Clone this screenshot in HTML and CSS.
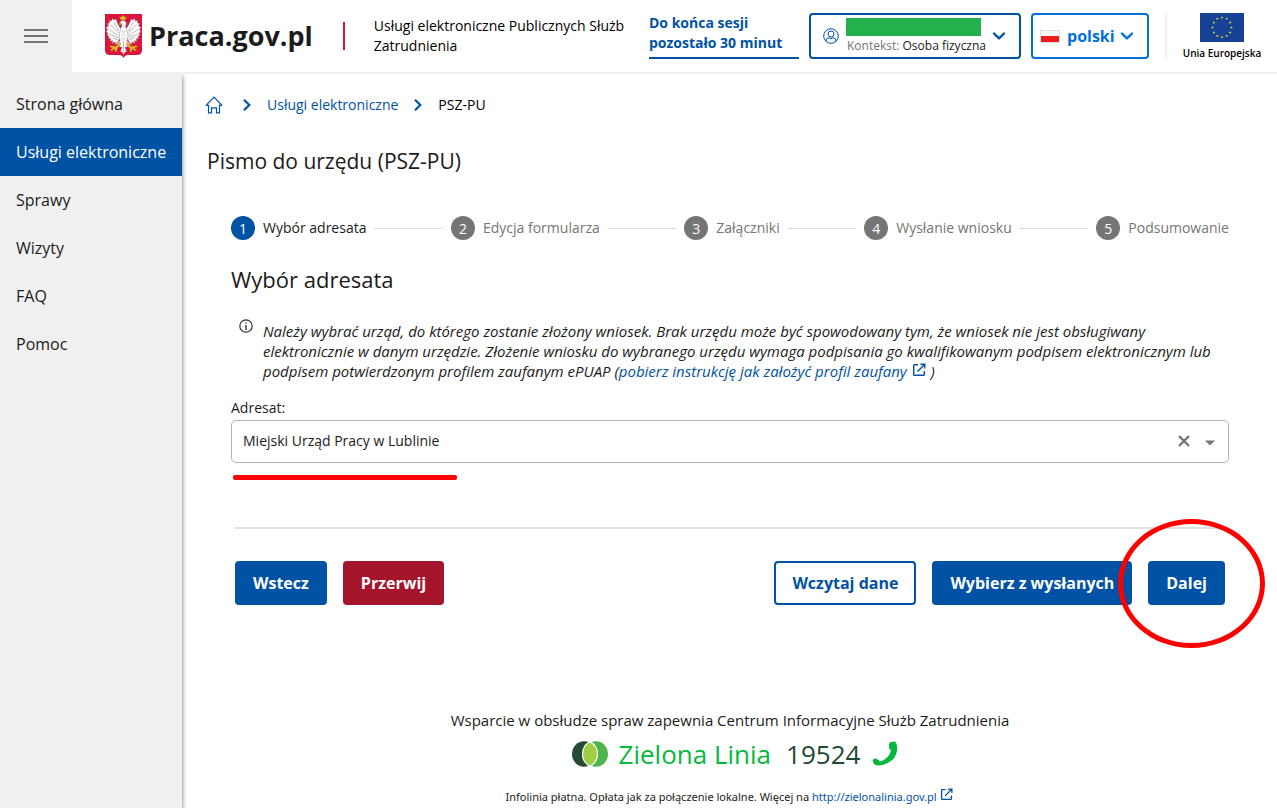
FILE: index.html
```html
<!DOCTYPE html>
<html lang="pl">
<head>
<meta charset="utf-8">
<meta name="viewport" content="width=device-width, initial-scale=1">
<title>Pismo do urzędu (PSZ-PU) - Praca.gov.pl</title>
<link rel="stylesheet" href="styles.css">
</head>
<body>
<svg class="defs" aria-hidden="true">
  <symbol id="external" viewBox="0 0 14 14"><path d="M6 1.700H2.500a.8.8 0 0 0-.8.8v9a.8.8 0 0 0 .8.8h9a.8.8 0 0 0 .8-.8V8M8.500 1.200h4.300v4.300M12.600 1.400 5.500 8.500" fill="none" stroke="currentColor" stroke-width="1.400"/></symbol>
  <symbol id="chevron-down" viewBox="0 0 14 10"><path d="M2 2.500 7 7.300 12 2.500" fill="none" stroke="currentColor" stroke-width="2.400" stroke-linecap="round" stroke-linejoin="round"/></symbol>
  <symbol id="chevron-right" viewBox="0 0 8 14"><path d="M1 1.800 6.300 7 1 12.200" fill="none" stroke="currentColor" stroke-width="2.200"/></symbol>
  <symbol id="star" viewBox="-5 -5 10 10"><path d="M0-5 1.200-1.600H4.800L1.900.6 2.900 4 0 1.900-2.900 4-1.900.6-4.800-1.600H-1.200Z"/></symbol>
</svg>

<header class="header">
  <button class="menu-toggle" type="button" aria-label="Menu">
    <svg width="24" height="16" viewBox="0 0 24 16"><path d="M0 2h24M0 8h24M0 14h24" stroke="#757575" stroke-width="2"/></svg>
  </button>
  <div class="header-body">
    <a class="brand" href="#">
      <svg class="crest" width="37" height="44" viewBox="0 0 74 88" aria-hidden="true">
        <path d="M0 0h74v72q0 10-10 10H46q-6 0-9 6-3-6-9-6H10Q0 82 0 72Z" fill="#dc143c"/>
        <g fill="#fff" stroke="#8b7f80" stroke-width="1">
          <path d="M33 29C27 27 26 18 21 10L18 12 15 9 13 14 9 13 9 18 5 19 7 24 2 27 5 31 2 36 6 38 4 43 8 44 7 49 11 49 11 55 15 53 15 59 20 55 21 62 26 55 30 49Z"/>
          <path d="M41 29C47 27 48 18 53 10L56 12 59 9 61 14 65 13 65 18 69 19 67 24 72 27 69 31 72 36 68 38 70 43 66 44 67 49 63 49 63 55 59 53 59 59 54 55 53 62 48 55 44 49Z"/>
          <path d="M32 28 34 22 31 20 28 21 31 15Q37 10 42 16 44 20 41 25L43 31Q49 42 44 53L51 60 44 61 46 66 40 66 43 75 39 77 37 82 35 77 31 75 34 66 28 66 30 61 23 60 30 53Q26 40 32 28Z"/>
        </g>
        <path d="M11 21 27 38M7 30 27 44M8 40 27 48M15 48 27 52M17 16 28 34M63 21 47 38M67 30 47 44M66 40 47 48M59 48 47 52M57 16 46 34M34 34l3 3 4-3M33 41l4 3 4-3M33 48l4 3 4-3M37 54v22" fill="none" stroke="#aaa0a0" stroke-width="1.500"/>
        <path d="M31 12 29 5 33 6 36 2 39 6 43 5 41 12ZM27 20l5-2 2 3-5 1Z" fill="#eab72b" stroke="#8a5a16" stroke-width=".8"/>
        <path d="M29 56 22 65 11 63 9 66 16 68 10 72 13 74 20 70 20 76 23 76 25 68 32 60ZM45 56 52 65 63 63 65 66 58 68 64 72 61 74 54 70 54 76 51 76 49 68 42 60Z" fill="#f2bb23" stroke="#8a5a16" stroke-width=".7"/>
      </svg>
      <span class="brand-name">Praca.gov.pl</span>
    </a>
    <span class="brand-divider"></span>
    <p class="tagline">Usługi elektroniczne Publicznych Służb Zatrudnienia</p>
    <p class="session">Do końca sesji pozostało 30 minut</p>
    <button class="context" type="button">
      <svg width="16" height="16" viewBox="0 0 16 16" fill="none" stroke="currentColor" aria-hidden="true"><circle cx="8" cy="8" r="7.300"/><circle cx="8" cy="6" r="3"/><path d="M3.200 13.200V12q0-2 3-2.200L8 10.700l1.800-.9q3 .2 3 2.200v1.200"/></svg>
      <span class="context-text">
        <span class="redacted"></span>
        <span class="context-label"><span class="muted">Kontekst:</span> Osoba fizyczna</span>
      </span>
      <svg width="14" height="10" aria-hidden="true"><use href="#chevron-down"/></svg>
    </button>
    <button class="language" type="button">
      <svg width="20" height="13" viewBox="0 0 20 13" aria-hidden="true"><path d="M.5.5h19v12H.5Z" fill="#f7f7f7" stroke="#ddd"/><path d="M1 6h18v6H1Z" fill="#ee1c1c"/></svg>
      <span>polski</span>
      <svg width="14" height="10" aria-hidden="true"><use href="#chevron-down"/></svg>
    </button>
    <div class="eu">
      <svg width="44" height="29" viewBox="0 0 44 29" fill="#f5e625" aria-hidden="true">
        <path d="M0 0h44v29H0Z" fill="#164194"/>
        <use href="#star" x="20.500" y="3" width="3" height="3"/><use href="#star" x="25.200" y="4.300" width="3" height="3"/><use href="#star" x="28.700" y="8" width="3" height="3"/><use href="#star" x="30" y="13" width="3" height="3"/><use href="#star" x="28.700" y="18" width="3" height="3"/><use href="#star" x="25.200" y="21.500" width="3" height="3"/><use href="#star" x="20.500" y="22.800" width="3" height="3"/><use href="#star" x="15.800" y="21.500" width="3" height="3"/><use href="#star" x="12.300" y="18" width="3" height="3"/><use href="#star" x="11" y="13" width="3" height="3"/><use href="#star" x="12.300" y="8" width="3" height="3"/><use href="#star" x="15.800" y="4.300" width="3" height="3"/>
      </svg>
      <span>Unia Europejska</span>
    </div>
  </div>
</header>

<div class="layout">
  <nav class="sidebar" aria-label="Menu główne">
    <a href="#">Strona główna</a>
    <a class="active" href="#" aria-current="page">Usługi elektroniczne</a>
    <a href="#">Sprawy</a>
    <a href="#">Wizyty</a>
    <a href="#">FAQ</a>
    <a href="#">Pomoc</a>
  </nav>

  <div class="content">
    <nav class="breadcrumbs" aria-label="Okruszki">
      <a href="#" aria-label="Strona główna"><svg width="18" height="18" viewBox="0 0 18 18" fill="none" stroke="currentColor" stroke-width="1.200"><path d="M1 9.300 9 1.200l8 8.100M1 9.300h2.500v7.500h3v-5h5v5h3V9.300H17"/></svg></a>
      <svg width="8" height="14" aria-hidden="true"><use href="#chevron-right"/></svg>
      <a href="#">Usługi elektroniczne</a>
      <svg width="8" height="14" aria-hidden="true"><use href="#chevron-right"/></svg>
      <span>PSZ-PU</span>
    </nav>
    <h1>Pismo do urzędu (PSZ-PU)</h1>

    <main class="panel">
      <ol class="stepper">
        <li class="step current"><span class="num">1</span><span>Wybór adresata</span></li>
        <li class="line" role="presentation"></li>
        <li class="step"><span class="num">2</span><span>Edycja formularza</span></li>
        <li class="line" role="presentation"></li>
        <li class="step"><span class="num">3</span><span>Załączniki</span></li>
        <li class="line" role="presentation"></li>
        <li class="step"><span class="num">4</span><span>Wysłanie wniosku</span></li>
        <li class="line" role="presentation"></li>
        <li class="step"><span class="num">5</span><span>Podsumowanie</span></li>
      </ol>

      <h2>Wybór adresata</h2>

      <div class="info">
        <svg width="14" height="14" viewBox="0 0 14 14" fill="none" stroke="#333" aria-hidden="true"><circle cx="7" cy="7" r="6.200" stroke-width="1.200"/><path d="M7 6v5M7 3.400v1.400" stroke-width="1.400"/></svg>
        <p>Należy wybrać urząd, do którego zostanie złożony wniosek. Brak urzędu może być spowodowany tym, że wniosek nie jest obsługiwany elektronicznie w danym urzędzie. Złożenie wniosku do wybranego urzędu wymaga podpisania go kwalifikowanym podpisem elektronicznym lub podpisem potwierdzonym profilem zaufanym ePUAP (<a href="#">pobierz instrukcję jak założyć profil zaufany <svg class="ext" width="14" height="14" aria-hidden="true"><use href="#external"/></svg></a> )</p>
      </div>

      <div class="field">
        <label for="adresat">Adresat:</label>
        <div class="combo">
          <input id="adresat" type="text" value="Miejski Urząd Pracy w Lublinie">
          <button type="button" aria-label="Wyczyść"><svg width="14" height="14" viewBox="0 0 14 14"><path d="m2 2 10 10M12 2 2 12" stroke="#757575" stroke-width="2.400"/></svg></button>
          <button type="button" aria-label="Otwórz"><svg width="10" height="6" viewBox="0 0 10 6"><path d="M0 .5h10L5 5.500Z" fill="#757575"/></svg></button>
        </div>
        <span class="mark-line"></span>
      </div>

      <div class="actions">
        <button class="btn" type="button">Wstecz</button>
        <button class="btn danger" type="button">Przerwij</button>
        <button class="btn outline" type="button">Wczytaj dane</button>
        <button class="btn" type="button">Wybierz z wysłanych</button>
        <div class="next">
          <button class="btn" type="button">Dalej</button>
          <span class="mark-ring"></span>
        </div>
      </div>
    </main>

    <footer class="footer">
      <p>Wsparcie w obsłudze spraw zapewnia Centrum Informacyjne Służb Zatrudnienia</p>
      <div class="hotline">
        <svg width="36" height="26" viewBox="0 0 36 26" aria-hidden="true"><ellipse cx="12" cy="13" rx="12" ry="12.700" fill="#264b34"/><ellipse cx="24" cy="13" rx="12" ry="12.700" fill="#4db54b"/><path d="M18 .8C28 6 28 20 18 25.200 8 20 8 6 18 .8Z" fill="#9fce42" stroke="#fff" stroke-width="1.200"/></svg>
        <span class="name">Zielona Linia</span>
        <span class="number">19524</span>
        <svg width="26" height="26" viewBox="0 0 26 26" aria-hidden="true"><path d="M18.500 1 22.200.6Q25 .8 25.300 8.500 24 18 16.500 21.500 9 25.700 3.500 24 .6 22.500.7 18.800L3.200 17.300 7.200 19.300 7.700 20.700Q17.500 17.500 19 9L17.300 8 16.900 3.300Z" fill="#04b93c"/></svg>
      </div>
      <p class="small">Infolinia płatna. Opłata jak za połączenie lokalne. Więcej na <a href="#">http://zielonalinia.gov.pl <svg class="ext" width="13" height="13" aria-hidden="true"><use href="#external"/></svg></a></p>
    </footer>
  </div>
</div>
</body>
</html>
```

FILE: styles.css
```css
* { box-sizing: border-box; }
body {
  margin: 0;
  min-height: 100vh;
  display: flex;
  flex-direction: column;
  font: 14px/20px "Open Sans", "Noto Sans", sans-serif;
  color: #1b1b1b;
  background: #fff;
}
p, h1, h2, ol { margin: 0; padding: 0; }
a { color: #0052a5; text-decoration: none; }
button { font: inherit; cursor: pointer; }
svg { flex: none; }
.defs { position: absolute; width: 0; height: 0; }

.header { display: flex; background: #f0f0f0; padding-bottom: 2px; }
.menu-toggle {
  flex: none;
  width: 72px;
  height: 72px;
  padding: 0;
  border: 0;
  background: #f0f0f0;
  display: flex;
  align-items: center;
  justify-content: center;
}
.header-body {
  flex: 1;
  display: flex;
  align-items: center;
  padding: 0 16px 0 33px;
  background: #fff;
  color: #000;
}
.brand { display: flex; align-items: center; gap: 7px; color: #1b1b1b; }
.brand-name { font-size: 27px; line-height: 40px; font-weight: 700; }
.brand-divider { width: 2px; height: 28px; margin: 0 29px 0 30px; background: #dc143c; }
.tagline { flex: 1; padding-right: 16px; }
.session {
  flex: none;
  width: 150px;
  padding-bottom: 4px;
  border-bottom: 2px solid #0052a5;
  color: #0052a5;
  font-weight: 700;
}
.context, .language {
  flex: none;
  height: 46px;
  display: flex;
  align-items: center;
  border: 2px solid #0052a5;
  border-radius: 4px;
  background: #fff;
  color: #0052a5;
}
.context { width: 212px; margin: 0 10px; padding: 0 12px; gap: 6px; }
.context-text { display: flex; flex-direction: column; gap: 2px; text-align: left; margin-left: 2px; }
.redacted { width: 135px; height: 18px; background: #24b14d; margin-left: -1px; }
.context-label { font-size: 12px; line-height: 16px; color: #1b1b1b; white-space: nowrap; }
.muted { color: #757575; }
.language {
  width: 118px;
  padding: 0 7px;
  gap: 7px;
  border-color: #006fdc;
  color: #006fdc;
  font-size: 16px;
  font-weight: 700;
}
.language svg:last-child { margin-left: -2px; }
.eu {
  flex: none;
  width: 96px;
  height: 46px;
  display: flex;
  flex-direction: column;
  align-items: center;
  gap: 4px;
  margin-left: 16px;
  padding-left: 16px;
  border-left: 2px solid #f0f0f0;
  font-size: 10px;
  line-height: 14px;
  font-weight: 600;
  white-space: nowrap;
}

.layout { flex: 1; display: flex; }
.sidebar {
  flex: none;
  width: 182px;
  padding-top: 6px;
  background: #f0f0f0;
  box-shadow: 1px 2px 4px rgba(0, 0, 0, .4);
  clip-path: inset(0 -8px 0 0);
}
.sidebar a { display: block; padding: 12px 16px; font-size: 16px; line-height: 24px; color: #1b1b1b; white-space: nowrap; }
.sidebar .active { background: #0052a5; color: #fff; }

.content { flex: 1; min-width: 0; }
.breadcrumbs { display: flex; align-items: center; gap: 16px; padding: 21px 23px 0; color: #000; }
.breadcrumbs > svg { color: #0052a5; }
.breadcrumbs a { display: flex; }
.breadcrumbs a:first-child { margin-right: 4px; }
h1, h2 { font-weight: 500; }
h1 { padding: 31px 25px 0; font-size: 21px; line-height: 30px; }

.panel { padding: 40px 48px 0 49px; }
.stepper { display: flex; align-items: center; gap: 8px; list-style: none; }
.step { display: flex; align-items: center; gap: 8px; color: #757575; line-height: 22px; white-space: nowrap; }
.num {
  width: 24px;
  height: 24px;
  border-radius: 50%;
  background: #757575;
  color: #fff;
  text-align: center;
  line-height: 26px;
}
.current { color: #1b1b1b; }
.current .num { background: #0052a5; }
.line { flex: 1; height: 1px; background: #dcdcdc; }
h2 { margin-top: 24px; font-size: 22px; line-height: 30px; }
.info { display: flex; gap: 10px; padding: 25px 0 0 8px; }
.info p { padding-top: 2px; font-size: 15px; font-style: italic; }
.ext { margin: 0 1px; }

.field { position: relative; margin-top: 17px; }
.field label { display: block; }
.combo {
  display: flex;
  align-items: center;
  height: 43px;
  margin-top: 2px;
  padding: 0 8px 1px 0;
  border: 1px solid #b3b3b3;
  border-radius: 5px;
}
.combo input {
  flex: 1;
  min-width: 0;
  padding: 0 11px;
  border: 0;
  outline: 0;
  background: none;
  font: inherit;
  color: #1b1b1b;
}
.combo button {
  display: flex;
  align-items: center;
  justify-content: center;
  width: 26px;
  height: 26px;
  padding: 0;
  border: 0;
  background: none;
}
.combo button:last-child { width: 20px; margin-left: 3px; padding-top: 4px; }
.mark-line {
  position: absolute;
  left: 2px;
  bottom: -17px;
  width: 224px;
  height: 5px;
  border-radius: 2px;
  background: #f00;
}

.actions {
  display: flex;
  gap: 16px;
  margin: 64px 4px 0;
  padding-top: 32px;
  border-top: 2px solid #dfdfdf;
}
.btn {
  height: 44px;
  padding: 0 16px;
  border: 2px solid #0052a5;
  border-radius: 4px;
  background: #0052a5;
  color: #fff;
  font-size: 16px;
  font-weight: 700;
  white-space: nowrap;
}
.danger { border-color: #a4142b; background: #a4142b; }
.outline { margin-left: auto; background: #fff; color: #0052a5; }
.next { position: relative; }
.mark-ring {
  position: absolute;
  top: -42px;
  right: -40px;
  width: 147px;
  height: 129px;
  border: 5px solid #f00;
  border-radius: 50%;
  pointer-events: none;
}

.footer { padding: 105px 48px 0 49px; text-align: center; font-size: 15px; }
.hotline { display: flex; align-items: center; justify-content: center; margin: 6px 0 15px; padding-left: 10px; font-size: 26px; line-height: 36px; }
.name { margin: 0 15px 0 11px; color: #04b93c; }
.number { margin-right: 12px; color: #1d4a30; }
.small { font-family: "Noto Sans", "Open Sans", sans-serif; font-size: 11px; }
```
